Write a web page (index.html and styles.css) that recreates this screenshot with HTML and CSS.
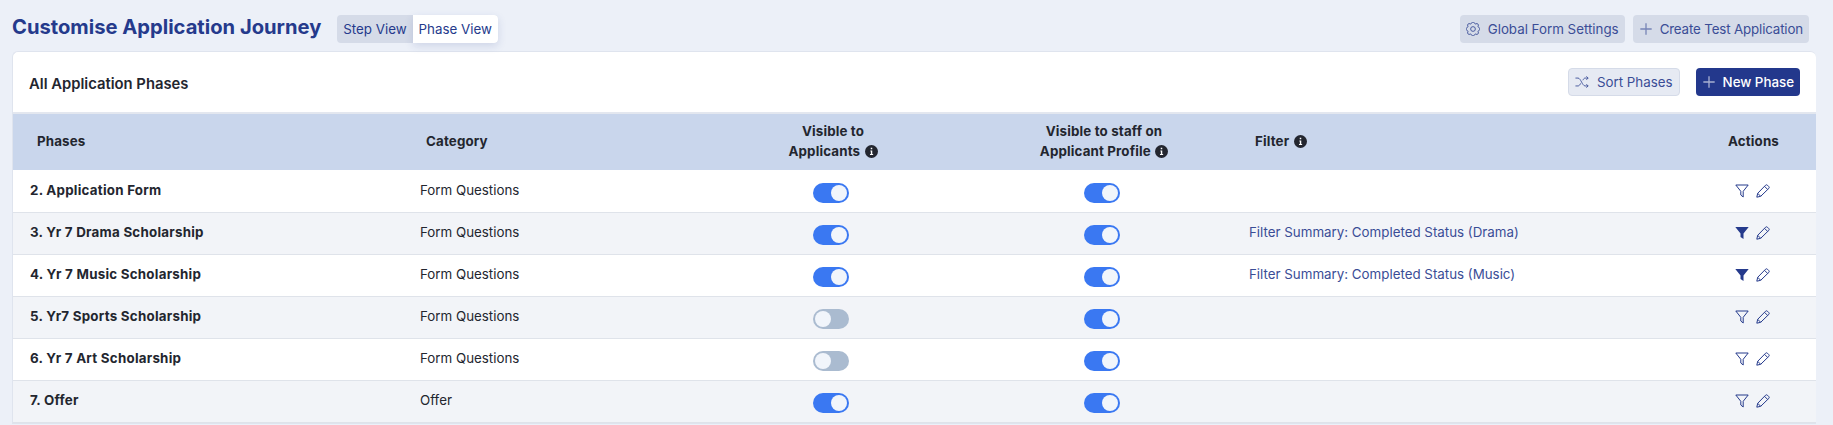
FILE: index.html
```html
<!DOCTYPE html>
<html lang="en">
<head>
    <meta charset="UTF-8">
    <title>Customise Application Journey</title>
    <link rel="stylesheet" href="styles.css">
</head>
<body>
    <svg class="icon-defs" width="0" height="0">
        <symbol id="i-plus" viewBox="0 0 16 16"><path d="M8 1.500v13M1.500 8h13" fill="none" stroke="currentColor" stroke-width="1.500"/></symbol>
        <symbol id="i-gear" viewBox="0 0 16 16"><g fill="none" stroke="currentColor" stroke-width="1"><circle cx="8" cy="8" r="2.700"/><path d="M9.796 1.343c-.527-1.790-3.065-1.790-3.592 0l-.094.319a.873.873 0 0 1-1.255.520l-.292-.160c-1.640-.892-3.433.902-2.540 2.541l.159.292a.873.873 0 0 1-.520 1.255l-.319.094c-1.790.527-1.790 3.065 0 3.592l.319.094a.873.873 0 0 1 .520 1.255l-.160.292c-.892 1.640.901 3.434 2.541 2.540l.292-.159a.873.873 0 0 1 1.255.520l.094.319c.527 1.790 3.065 1.790 3.592 0l.094-.319a.873.873 0 0 1 1.255-.520l.292.160c1.640.893 3.434-.902 2.540-2.541l-.159-.292a.873.873 0 0 1 .520-1.255l.319-.094c1.790-.527 1.790-3.065 0-3.592l-.319-.094a.873.873 0 0 1-.520-1.255l.160-.292c.893-1.640-.902-3.433-2.541-2.540l-.292.159a.873.873 0 0 1-1.255-.520z"/></g></symbol>
        <symbol id="i-shuffle" viewBox="0 0 16 16"><path d="M.5 3.500h3c3 0 5 9 8 9h3.500M.5 12.500h3c1.200 0 2.200-1.400 3.100-3M9 6c.7-1.400 1.500-2.500 2.500-2.500h3.500M13 1.500l2 2-2 2M13 10.500l2 2-2 2" fill="none" stroke="currentColor" stroke-width="1"/></symbol>
        <symbol id="i-funnel" viewBox="0 0 14 14"><path d="M.8 1h12.400L8.200 7.300V13l-2.400-2V7.300z" fill="none" stroke="currentColor" stroke-width="1"/></symbol>
        <symbol id="i-funnel-on" viewBox="0 0 14 14"><path d="M.3 1h13.400L8.500 7.500V13l-3-2V7.500z" fill="currentColor"/></symbol>
        <symbol id="i-pencil" viewBox="0 0 14 14"><path d="M.8 13.200l.9-3.900L9.600 1.200a1.300 1.300 0 0 1 1.800 0l1.400 1.400a1.300 1.300 0 0 1 0 1.800L4.700 12.300zM8.500 2.300l3.200 3.200M1.700 9.300l3 3" fill="none" stroke="currentColor" stroke-width="1"/></symbol>
        <symbol id="i-info" viewBox="0 0 12 12"><circle cx="6" cy="6" r="6" fill="currentColor"/><path d="M5 5h1.700v3.200h.8V9.300H4.600V8.200h.8V6H5zM5.300 2.500h1.400v1.400H5.300z" fill="#fff"/></symbol>
    </svg>

    <div class="top-bar">
        <div class="top-left">
            <h1>Customise Application Journey</h1>
            <div class="view-switch">
                <span class="view-opt">Step View</span>
                <span class="view-opt active">Phase View</span>
            </div>
        </div>
        <div class="top-right">
            <button class="btn btn-soft"><svg class="btn-icon"><use href="#i-gear"/></svg>Global Form Settings</button>
            <button class="btn btn-soft btn-tight"><svg class="btn-icon plus"><use href="#i-plus"/></svg>Create Test Application</button>
        </div>
    </div>

    <div class="card">
        <div class="card-head">
            <h2>All Application Phases</h2>
            <div class="card-actions">
                <button class="btn btn-outline"><svg class="btn-icon"><use href="#i-shuffle"/></svg>Sort Phases</button>
                <button class="btn btn-primary"><svg class="btn-icon plus"><use href="#i-plus"/></svg>New Phase</button>
            </div>
        </div>
        <table class="phases">
            <colgroup>
                <col class="c-phase"><col class="c-cat"><col class="c-vis"><col class="c-staff"><col class="c-filter"><col class="c-act">
            </colgroup>
            <thead>
                <tr>
                    <th class="th-indent">Phases</th>
                    <th class="th-indent">Category</th>
                    <th class="center">Visible to<br>Applicants <svg class="info"><use href="#i-info"/></svg></th>
                    <th class="center">Visible to staff on<br>Applicant Profile <svg class="info"><use href="#i-info"/></svg></th>
                    <th class="th-indent">Filter <svg class="info"><use href="#i-info"/></svg></th>
                    <th class="th-actions">Actions</th>
                </tr>
            </thead>
            <tbody>
                <tr>
                    <td class="name">2. Application Form</td>
                    <td>Form Questions</td>
                    <td class="center"><span class="toggle on"></span></td>
                    <td class="center"><span class="toggle on"></span></td>
                    <td></td>
                    <td class="acts"><svg class="act"><use href="#i-funnel"/></svg><svg class="act"><use href="#i-pencil"/></svg></td>
                </tr>
                <tr>
                    <td class="name">3. Yr 7 Drama Scholarship</td>
                    <td>Form Questions</td>
                    <td class="center"><span class="toggle on"></span></td>
                    <td class="center"><span class="toggle on"></span></td>
                    <td class="filter">Filter Summary: Completed Status (Drama)</td>
                    <td class="acts"><svg class="act"><use href="#i-funnel-on"/></svg><svg class="act"><use href="#i-pencil"/></svg></td>
                </tr>
                <tr>
                    <td class="name">4. Yr 7 Music Scholarship</td>
                    <td>Form Questions</td>
                    <td class="center"><span class="toggle on"></span></td>
                    <td class="center"><span class="toggle on"></span></td>
                    <td class="filter">Filter Summary: Completed Status (Music)</td>
                    <td class="acts"><svg class="act"><use href="#i-funnel-on"/></svg><svg class="act"><use href="#i-pencil"/></svg></td>
                </tr>
                <tr>
                    <td class="name">5. Yr7 Sports Scholarship</td>
                    <td>Form Questions</td>
                    <td class="center"><span class="toggle"></span></td>
                    <td class="center"><span class="toggle on"></span></td>
                    <td></td>
                    <td class="acts"><svg class="act"><use href="#i-funnel"/></svg><svg class="act"><use href="#i-pencil"/></svg></td>
                </tr>
                <tr>
                    <td class="name">6. Yr 7 Art Scholarship</td>
                    <td>Form Questions</td>
                    <td class="center"><span class="toggle"></span></td>
                    <td class="center"><span class="toggle on"></span></td>
                    <td></td>
                    <td class="acts"><svg class="act"><use href="#i-funnel"/></svg><svg class="act"><use href="#i-pencil"/></svg></td>
                </tr>
                <tr>
                    <td class="name">7. Offer</td>
                    <td>Offer</td>
                    <td class="center"><span class="toggle on"></span></td>
                    <td class="center"><span class="toggle on"></span></td>
                    <td></td>
                    <td class="acts"><svg class="act"><use href="#i-funnel"/></svg><svg class="act"><use href="#i-pencil"/></svg></td>
                </tr>
            </tbody>
        </table>
    </div>
</body>
</html>
```
FILE: styles.css
```css
* {
    margin: 0;
    padding: 0;
    box-sizing: border-box;
}

html, body {
    height: 100%;
    overflow: hidden;
}

body {
    background: #ecf0f8;
    color: #23262f;
    font-family: 'Inter', 'Liberation Sans', sans-serif;
    font-size: 13.33px;
}

.icon-defs {
    position: absolute;
}

/* Top bar */
.top-bar {
    display: flex;
    justify-content: space-between;
    align-items: center;
    height: 51px;
    padding: 15px 24px 8px 12px;
}

.top-left, .top-right, .card-actions {
    display: flex;
    align-items: center;
}

.top-right {
    gap: 8px;
}

h1 {
    font-size: 20.16px;
    font-weight: 700;
    color: #253a8c;
    margin-right: 16px;
    margin-top: -6px;
}

.view-switch {
    display: flex;
    height: 28px;
    background: #d5dbe8;
    border-radius: 4px;
}

.view-opt {
    display: flex;
    align-items: center;
    padding: 0 6px;
    color: #253a8c;
}

.view-opt.active {
    background: #fff;
    border-radius: 0 4px 4px 0;
    box-shadow: 0 3px 8px rgba(37, 58, 140, 0.15);
}

.btn {
    display: flex;
    align-items: center;
    height: 28px;
    padding: 0 6px;
    border: 0;
    border-radius: 4px;
    font-family: inherit;
    font-size: 13.33px;
    white-space: nowrap;
}

.btn-tight {
    letter-spacing: -0.15px;
}

.btn-icon {
    width: 14px;
    height: 14px;
    margin-right: 8px;
}

.btn-icon.plus {
    margin-right: 7px;
    opacity: 0.6;
}

.btn-soft {
    background: #d5dbe8;
    color: #3a4d96;
}

.btn-outline {
    background: #e6eaf3;
    border: 1px solid #d5dbe8;
    color: #3a4d96;
}

.btn-primary {
    background: #23388c;
    color: #fff;
    font-weight: 500;
}

/* Card */
.card {
    margin: 0 17px 0 12px;
    background: #fff;
    border: 1px solid #dfe4ee;
    border-right-width: 0;
    border-radius: 6px 6px 0 0;
}

.card-head {
    display: flex;
    justify-content: space-between;
    align-items: center;
    height: 62px;
    padding: 0 16px;
    border-bottom: 2px solid #e3e7ef;
}

h2 {
    font-size: 14.8px;
    font-weight: 600;
    margin-top: 3px;
}

.card-actions {
    gap: 16px;
}

/* Table */
.phases {
    width: 100%;
    table-layout: fixed;
    border-collapse: collapse;
}

.c-phase { width: 389px; }
.c-cat { width: 287px; }
.c-vis { width: 288px; }
.c-staff { width: 254px; }
.c-filter { width: 459px; }
.c-act { width: 126px; }

th {
    height: 56px;
    background: #c9d6ec;
    font-size: 13.33px;
    font-weight: 700;
    line-height: 20px;
    letter-spacing: 0.15px;
    text-align: left;
    padding: 0 18px 2px;
}

th.th-indent {
    padding-left: 24px;
}

th.th-actions {
    padding-left: 38px;
    padding-right: 0;
}

.center,
th.center {
    text-align: center;
}

.info {
    width: 13px;
    height: 13px;
    margin-left: 1px;
    vertical-align: -2px;
}

td {
    height: 42px;
    padding: 0 18px 2px;
    border-bottom: 1px solid #dfe3ea;
    vertical-align: middle;
}

tbody tr:nth-child(even) td {
    background: #f2f4f8;
}

td.name {
    padding-left: 17px;
    font-weight: 700;
    letter-spacing: 0.25px;
}

td.filter {
    color: #3a4d96;
}

td.acts {
    padding-left: 45px;
    padding-right: 0;
    color: #253a8c;
}

.act {
    width: 14px;
    height: 14px;
    margin-right: 7px;
    vertical-align: middle;
}

/* Toggle */
.toggle {
    position: relative;
    display: inline-block;
    width: 36px;
    height: 20px;
    margin: 6px 4px 0 0;
    vertical-align: middle;
    background: #aabbd0;
    border-radius: 10px;
}

.toggle::after {
    content: "";
    position: absolute;
    top: 2px;
    left: 2px;
    width: 16px;
    height: 16px;
    background: #f1f5fb;
    border-radius: 50%;
}

.toggle.on {
    background: #3a78f2;
}

.toggle.on::after {
    left: 18px;
}
```
